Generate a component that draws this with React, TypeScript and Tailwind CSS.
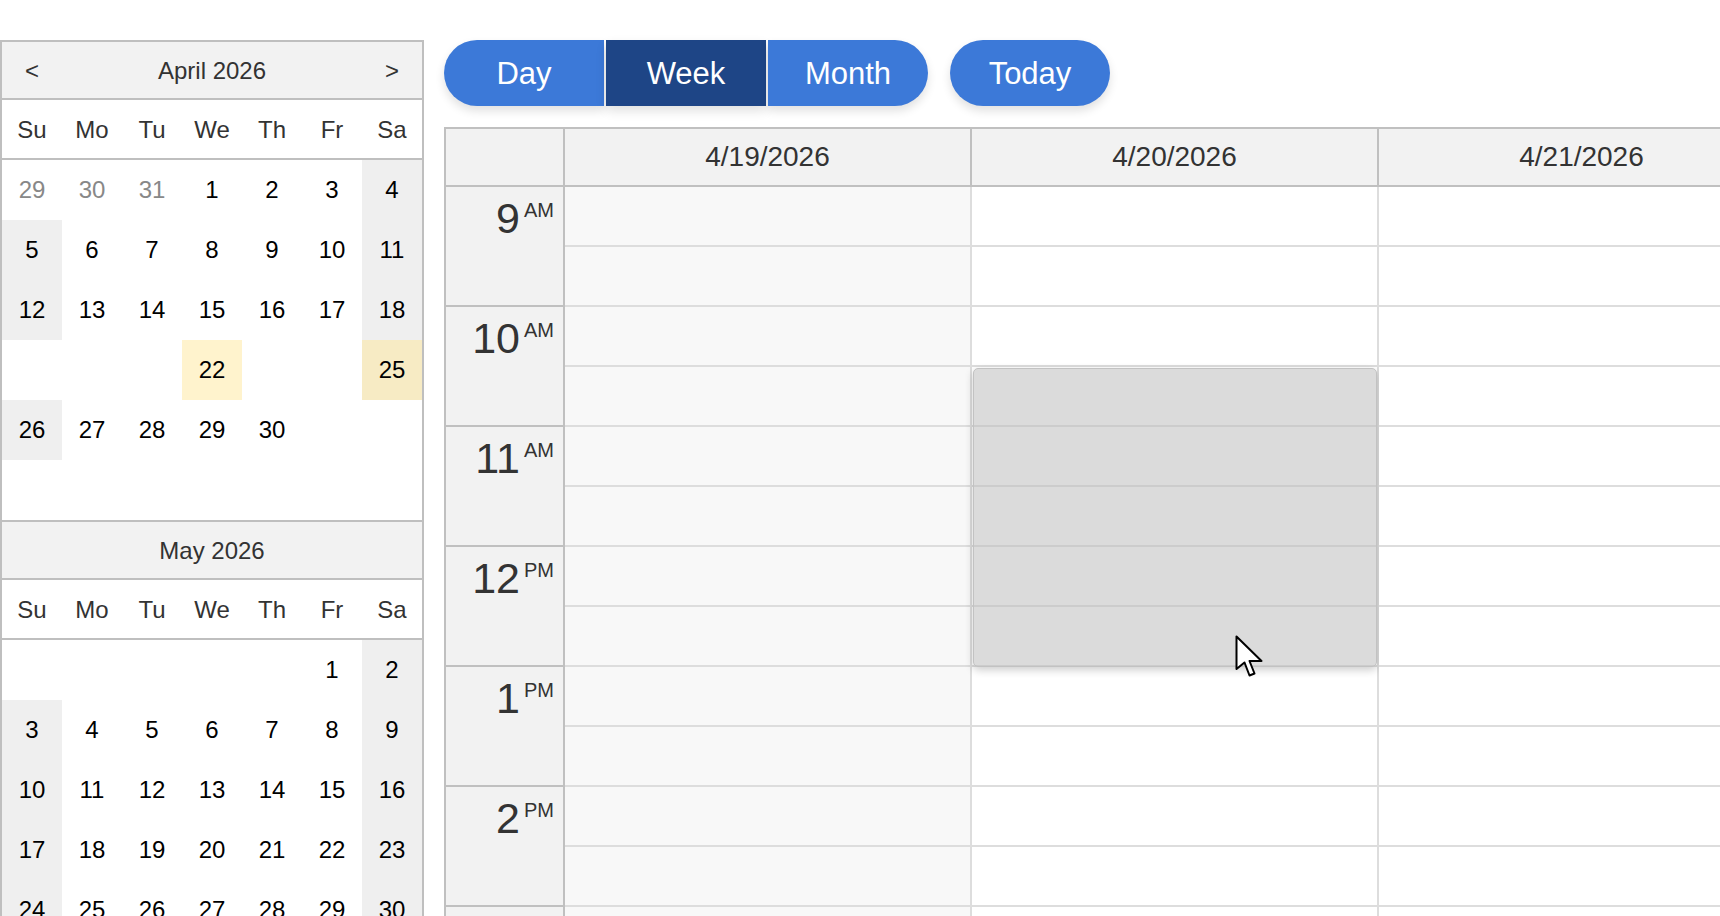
import React from 'react';

type Cell = { t: string; kind: 'day' | 'prev' | 'blank' | 'hl' | 'hlw' };

const WEEKDAYS = ['Su', 'Mo', 'Tu', 'We', 'Th', 'Fr', 'Sa'];

function d(t: string | number): Cell {
  return { t: String(t), kind: 'day' };
}
const blank: Cell = { t: '', kind: 'blank' };

const april: Cell[][] = [
  [{ t: '29', kind: 'prev' }, { t: '30', kind: 'prev' }, { t: '31', kind: 'prev' }, d(1), d(2), d(3), d(4)],
  [5, 6, 7, 8, 9, 10, 11].map(d),
  [12, 13, 14, 15, 16, 17, 18].map(d),
  [blank, blank, blank, { t: '22', kind: 'hl' }, blank, blank, { t: '25', kind: 'hlw' }],
  [d(26), d(27), d(28), d(29), d(30), blank, blank],
  [blank, blank, blank, blank, blank, blank, blank],
];

const may: Cell[][] = [
  [blank, blank, blank, blank, blank, d(1), d(2)],
  [3, 4, 5, 6, 7, 8, 9].map(d),
  [10, 11, 12, 13, 14, 15, 16].map(d),
  [17, 18, 19, 20, 21, 22, 23].map(d),
  [24, 25, 26, 27, 28, 29, 30].map(d),
  [d(31), blank, blank, blank, blank, blank, blank],
];

function cellClass(c: Cell, col: number) {
  const weekend = col === 0 || col === 6;
  if (c.kind === 'hl') return 'bg-[#fff3cd] text-black';
  if (c.kind === 'hlw') return 'bg-[#f7ebc4] text-black';
  if (c.kind === 'prev') return 'text-[#888888]';
  if (c.kind === 'day' && weekend) return 'bg-[#efefef] text-black';
  return 'text-black';
}

function MiniMonth({ title, rows, arrows, first }: { title: string; rows: Cell[][]; arrows?: boolean; first?: boolean }) {
  return (
    <div className={first ? '' : 'border-t-2 border-[#bfbfbf]'}>
      <div className="grid grid-cols-7 h-[58px] pt-[2px] items-center bg-[#f2f2f2] border-b-2 border-[#bfbfbf] text-[#333] text-[24px]">
        <span className="text-center">{arrows ? '<' : ''}</span>
        <span className="col-span-5 text-center">{title}</span>
        <span className="text-center">{arrows ? '>' : ''}</span>
      </div>
      <div className="grid grid-cols-7 h-[60px] pt-[1px] items-center border-b-2 border-[#bfbfbf] text-[#333] text-[24px]">
        {WEEKDAYS.map((w) => (
          <span key={w} className="text-center">{w}</span>
        ))}
      </div>
      {rows.map((row, i) => (
        <div key={i} className="grid grid-cols-7">
          {row.map((c, j) => (
            <div key={j} className={`h-[60px] flex items-center justify-center text-[24px] ${cellClass(c, j)}`}>
              {c.t}
            </div>
          ))}
        </div>
      ))}
    </div>
  );
}

const days = [
  { label: '4/19/2026', weekend: true },
  { label: '4/20/2026', weekend: false },
  { label: '4/21/2026', weekend: false },
  { label: '4/22/2026', weekend: false },
  { label: '4/23/2026', weekend: false },
  { label: '4/24/2026', weekend: false },
  { label: '4/25/2026', weekend: true },
];

const hours = [
  ['9', 'AM'],
  ['10', 'AM'],
  ['11', 'AM'],
  ['12', 'PM'],
  ['1', 'PM'],
  ['2', 'PM'],
  ['3', 'PM'],
  ['4', 'PM'],
];

function Cursor() {
  return (
    <svg width="30" height="44" viewBox="0 0 30 44" className="absolute left-[263px] top-[448px]">
      <path d="M1.5 1.5 L1.5 34 L9.5 27.5 L14.5 40.5 L19.5 38.5 L14.5 26 L26.5 26 Z" fill="#fff" stroke="#000" strokeWidth="2" strokeLinejoin="round" />
    </svg>
  );
}

export default function App() {
  return (
    <div className="h-screen w-screen overflow-hidden bg-white font-['Liberation_Sans',Arial,sans-serif] flex items-start">
      {/* mini calendars */}
      <div className="mt-[40px] w-[424px] shrink-0 border-2 border-[#bfbfbf]">
        <MiniMonth title="April 2026" rows={april} arrows first />
        <MiniMonth title="May 2026" rows={may} />
      </div>

      <div className="ml-[20px] mt-[40px] flex flex-col shrink-0">
        {/* toolbar */}
        <div className="flex items-center text-white text-[31px]">
          <div className="flex gap-[2px]">
            <button className="w-[160px] h-[66px] pt-[3px] rounded-l-full bg-[#3c79d8] shadow-[0_5px_10px_rgba(0,0,0,0.12)]">Day</button>
            <button className="w-[160px] h-[66px] pt-[3px] bg-[#1e4586] shadow-[0_5px_10px_rgba(0,0,0,0.12)]">Week</button>
            <button className="w-[160px] h-[66px] pt-[3px] rounded-r-full bg-[#3c79d8] shadow-[0_5px_10px_rgba(0,0,0,0.12)]">Month</button>
          </div>
          <button className="ml-[22px] w-[160px] h-[66px] pt-[3px] rounded-full bg-[#3c79d8] shadow-[0_5px_10px_rgba(0,0,0,0.12)]">Today</button>
        </div>

        {/* week grid */}
        <div className="mt-[21px] border-l-2 border-t-2 border-[#c0c0c0] text-[#333]">
          <div className="flex h-[58px] bg-[#f2f2f2] border-b-2 border-[#c0c0c0]">
            <div className="w-[119px] shrink-0 border-r-2 border-[#c0c0c0]" />
            {days.map((day) => (
              <div key={day.label} className="w-[407px] shrink-0 border-r-2 border-[#c0c0c0] flex items-center justify-center text-[28px]">
                {day.label}
              </div>
            ))}
          </div>
          <div className="flex">
            <div className="w-[119px] shrink-0 border-r-2 border-[#c0c0c0] bg-[#f2f2f2]">
              {hours.map(([h, ap]) => (
                <div key={h} className="h-[120px] border-b-2 border-[#c0c0c0] flex justify-end items-start pt-[10px] pr-[9px]">
                  <span className="text-[43px] leading-none">{h}</span>
                  <span className="ml-[4px] mt-[3px] text-[20px] leading-none">{ap}</span>
                </div>
              ))}
            </div>
            {days.map((day, i) => (
              <div key={day.label} className={`relative w-[407px] shrink-0 border-r-2 border-[#dddddd] ${day.weekend ? 'bg-[#f8f8f8]' : 'bg-white'}`}>
                {Array.from({ length: hours.length * 2 }).map((_, k) => (
                  <div key={k} className="h-[60px] border-b-2 border-[#dddddd]" />
                ))}
                {i === 1 && (
                  <>
                    <div className="absolute left-[1px] right-0 top-[181px] h-[299px] rounded-[5px] border border-[#c2c2c2] bg-[rgba(190,190,190,0.55)] shadow-[0_3px_8px_rgba(0,0,0,0.2)]" />
                    <Cursor />
                  </>
                )}
              </div>
            ))}
          </div>
        </div>
      </div>
    </div>
  );
}
